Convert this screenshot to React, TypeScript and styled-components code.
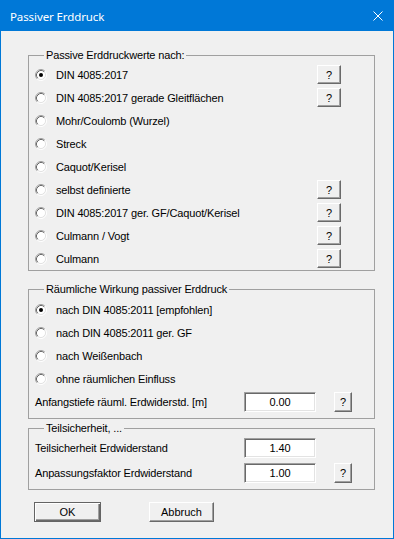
import React, {useState} from 'react';
import styled, {createGlobalStyle} from "styled-components";

const GlobalStyle = createGlobalStyle`
  body {
    margin: 0;
    background: #f0f0f0;
  }
`;

const Methods = [
    { value: 'din2017', label: 'DIN 4085:2017', help: true },
    { value: 'din2017g', label: 'DIN 4085:2017 gerade Gleitflächen', help: true },
    { value: 'mohr', label: 'Mohr/Coulomb (Wurzel)', help: false },
    { value: 'streck', label: 'Streck', help: false },
    { value: 'caquot', label: 'Caquot/Kerisel', help: false },
    { value: 'selbst', label: 'selbst definierte', help: true },
    { value: 'dinck', label: 'DIN 4085:2017 ger. GF/Caquot/Kerisel', help: true },
    { value: 'vogt', label: 'Culmann / Vogt', help: true },
    { value: 'culmann', label: 'Culmann', help: true },
];

const Spatial = [
    { value: 'din2011', label: 'nach DIN 4085:2011 [empfohlen]' },
    { value: 'din2011g', label: 'nach DIN 4085:2011 ger. GF' },
    { value: 'weiss', label: 'nach Weißenbach' },
    { value: 'none', label: 'ohne räumlichen Einfluss' },
];

const Window = styled.div`
  box-sizing: border-box;
  width: 394px;
  height: 539px;
  border: 1px solid #0078d7;
  background: #f0f0f0;
  display: flex;
  flex-direction: column;
  font-family: "Liberation Sans", Arial, sans-serif;
  font-size: 11px;
  letter-spacing: -0.15px;
  color: #000;
`;

const TitleBar = styled.div`
  height: 30px;
  background: #0078d7;
  display: flex;
  align-items: center;
  justify-content: space-between;
  padding: 0 10px 0 9px;
`;

const Title = styled.div`
  font-family: "Segoe UI", "Noto Sans", sans-serif;
  font-size: 11.5px;
  letter-spacing: -0.1px;
  color: #fff;
`;

const Body = styled.div`
  padding: 17px 18px 0 27px;
  display: flex;
  flex-direction: column;
`;

const Group = styled.fieldset<{ $top?: number; $padTop?: number; $padBottom?: number }>`
  margin: ${props => props.$top || 0}px 0 0 0;
  padding: ${props => props.$padTop || 0}px 6px ${props => props.$padBottom || 0}px 6px;
  border: 1px solid #a0a0a0;
  min-width: 0;
  display: flex;
  flex-direction: column;
`;

const Legend = styled.legend`
  margin-left: 9px;
  padding: 0 2px;
  line-height: 14px;
`;

const RadioRow = styled.div<{ $padRight?: number }>`
  height: 23px;
  display: flex;
  align-items: center;
  padding-right: ${props => props.$padRight || 0}px;
  cursor: default;
`;

const RadioLabel = styled.div`
  display: flex;
  align-items: center;
  gap: 9px;
`;

const FieldRows = styled.div`
  display: flex;
  flex-direction: column;
  gap: 2px;
`;

const FieldRow = styled.div`
  height: 23px;
  display: grid;
  grid-template-columns: 209px 72px 1fr;
  align-items: center;
`;

const Input = styled.div`
  box-sizing: border-box;
  height: 20px;
  background: #fff;
  border: 1px solid;
  border-color: #a0a0a0 #fff #fff #a0a0a0;
  box-shadow: inset 1px 1px 0 #696969, inset -1px -1px 0 #e3e3e3;
  display: flex;
  align-items: center;
  justify-content: center;
`;

const Button = styled.div<{ $w: number; $h?: number; $default?: boolean }>`
  box-sizing: border-box;
  width: ${props => props.$w}px;
  height: ${props => props.$h || 20}px;
  background: #f0f0f0;
  display: flex;
  align-items: center;
  justify-content: center;
  letter-spacing: 0;
  ${props => props.$default ? `
    border: 1px solid #646464;
    box-shadow: inset 1px 1px 0 #fff, inset -1px -1px 0 #696969, inset -2px -2px 0 #a0a0a0;
  ` : `
    border: 1px solid;
    border-color: #fff #696969 #696969 #fff;
    box-shadow: inset -1px -1px 0 #a0a0a0;
  `}
`;

const HelpRight = styled(Button)`
  margin-left: auto;
`;

const HelpField = styled(Button)`
  margin-left: 18px;
`;

const Buttons = styled.div`
  margin: 12px 0 0 6px;
  display: flex;
  gap: 48px;
`;

const Radio = ({checked}: { checked: boolean }) => (
    <svg width="12" height="12" viewBox="0 0 12 12">
        <circle cx="6" cy="6" r="4.5" fill="#fff" />
        <path d="M2.11 9.89 A5.5 5.5 0 0 1 9.89 2.11" fill="none" stroke="#a0a0a0" />
        <path d="M9.89 2.11 A5.5 5.5 0 0 1 2.11 9.89" fill="none" stroke="#fff" />
        <path d="M2.82 9.18 A4.5 4.5 0 0 1 9.18 2.82" fill="none" stroke="#696969" />
        <path d="M9.18 2.82 A4.5 4.5 0 0 1 2.82 9.18" fill="none" stroke="#e3e3e3" />
        {checked && <circle cx="6" cy="6" r="2" fill="#000" />}
    </svg>
);

const CloseIcon = () => (
    <svg width="10" height="10" viewBox="0 0 10 10">
        <path d="M0.5 0.5 L9.5 9.5 M9.5 0.5 L0.5 9.5" stroke="#fff" strokeWidth="1" />
    </svg>
);

const App = () => {
    const [method, setMethod] = useState(Methods[0].value);
    const [spatial, setSpatial] = useState(Spatial[0].value);

    return (
        <>
            <GlobalStyle />
            <Window>
                <TitleBar>
                    <Title>Passiver Erddruck</Title>
                    <CloseIcon />
                </TitleBar>
                <Body>
                    <Group $padTop={1}>
                        <Legend>Passive Erddruckwerte nach:</Legend>
                        {Methods.map(m => (
                            <RadioRow key={m.value} $padRight={27} onClick={() => setMethod(m.value)}>
                                <RadioLabel>
                                    <Radio checked={method === m.value} />
                                    {m.label}
                                </RadioLabel>
                                {m.help && <HelpRight $w={24} $h={19}>?</HelpRight>}
                            </RadioRow>
                        ))}
                    </Group>
                    <Group $top={11} $padTop={2} $padBottom={5}>
                        <Legend>Räumliche Wirkung passiver Erddruck</Legend>
                        {Spatial.map(s => (
                            <RadioRow key={s.value} onClick={() => setSpatial(s.value)}>
                                <RadioLabel>
                                    <Radio checked={spatial === s.value} />
                                    {s.label}
                                </RadioLabel>
                            </RadioRow>
                        ))}
                        <FieldRow>
                            <span>Anfangstiefe räuml. Erdwiderstd. [m]</span>
                            <Input>0.00</Input>
                            <HelpField $w={18}>?</HelpField>
                        </FieldRow>
                    </Group>
                    <Group $top={2} $padTop={1} $padBottom={5}>
                        <Legend>Teilsicherheit, ...</Legend>
                        <FieldRows>
                            <FieldRow>
                                <span>Teilsicherheit Erdwiderstand</span>
                                <Input>1.40</Input>
                            </FieldRow>
                            <FieldRow>
                                <span>Anpassungsfaktor Erdwiderstand</span>
                                <Input>1.00</Input>
                                <HelpField $w={18}>?</HelpField>
                            </FieldRow>
                        </FieldRows>
                    </Group>
                    <Buttons>
                        <Button $w={67} $default>OK</Button>
                        <Button $w={65}>Abbruch</Button>
                    </Buttons>
                </Body>
            </Window>
        </>
    );
};

export default App;
